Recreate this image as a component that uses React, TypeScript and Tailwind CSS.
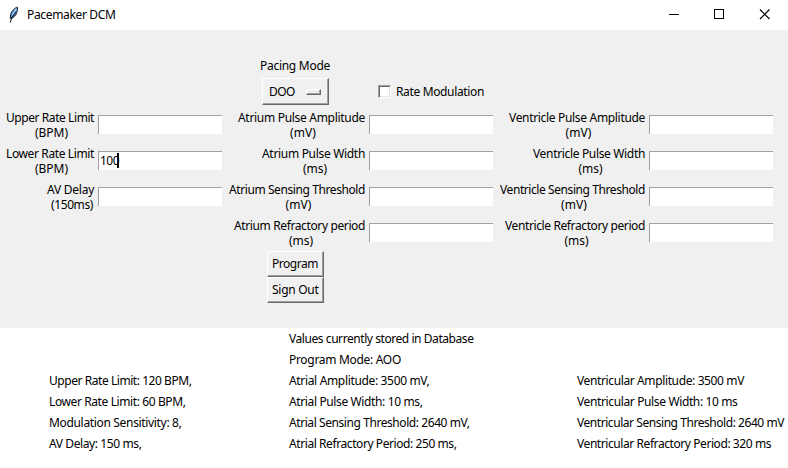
import { useLayoutEffect, useRef, useState } from "react";

// A run of text whose tracking is adjusted so that it fills the given width.
function Label({ text, w, className = "" }: { text: string; w: number; className?: string }) {
  const ref = useRef<HTMLSpanElement>(null);
  const [tracking, setTracking] = useState(0);
  useLayoutEffect(() => {
    if (ref.current) {
      const natural = ref.current.getBoundingClientRect().width;
      setTracking((w - natural) / text.length);
    }
  }, [text, w]);
  return (
    <span ref={ref} className={`inline-block whitespace-pre ${className}`} style={{ letterSpacing: tracking }}>
      {text}
    </span>
  );
}

type FieldProps = { name: string; w: number; unit: string; uw: number; value?: string };

function Field({ name, w, unit, uw, value }: FieldProps) {
  return (
    <>
      <div className="flex flex-col items-center justify-self-end leading-[15px]">
        <Label text={name} w={w} />
        <Label text={unit} w={uw} className="ml-[3px]" />
      </div>
      <div className="mb-px flex h-[19px] w-[124px] items-start border-l border-t border-[#a0a0a0] bg-white pl-px pt-px leading-[15px]">
        {value && (
          <>
            <Label text={value} w={19} />
            <span className="-ml-[2px] h-[15px] w-[2px] bg-black" />
          </>
        )}
      </div>
    </>
  );
}

const fields: (FieldProps | null)[][] = [
  [
    { name: "Upper Rate Limit", w: 88, unit: "(BPM)", uw: 33 },
    { name: "Atrium Pulse Amplitude", w: 127, unit: "(mV)", uw: 26 },
    { name: "Ventricle Pulse Amplitude", w: 136, unit: "(mV)", uw: 26 },
  ],
  [
    { name: "Lower Rate Limit", w: 88, unit: "(BPM)", uw: 33, value: "100" },
    { name: "Atrium Pulse Width", w: 103, unit: "(ms)", uw: 24 },
    { name: "Ventricle Pulse Width", w: 112, unit: "(ms)", uw: 24 },
  ],
  [
    { name: "AV Delay", w: 47, unit: "(150ms)", uw: 42 },
    { name: "Atrium Sensing Threshold", w: 136, unit: "(mV)", uw: 26 },
    { name: "Ventricle Sensing Threshold", w: 145, unit: "(mV)", uw: 26 },
  ],
  [
    null,
    { name: "Atrium Refractory period", w: 131, unit: "(ms)", uw: 24 },
    { name: "Ventricle Refractory period", w: 140, unit: "(ms)", uw: 24 },
  ],
];

const stored: [string, number][][] = [
  [["", 0], ["Values currently stored in Database", 184.5], ["", 0]],
  [["", 0], ["Program Mode: AOO", 112], ["", 0]],
  [["Upper Rate Limit: 120 BPM,", 142.5], ["Atrial Amplitude: 3500 mV,", 140.5], ["Ventricular Amplitude: 3500 mV", 167]],
  [["Lower Rate Limit: 60 BPM,", 136.5], ["Atrial Pulse Width: 10 ms,", 133.5], ["Ventricular Pulse Width: 10 ms", 160.5]],
  [["Modulation Sensitivity: 8,", 132.5], ["Atrial Sensing Threshold: 2640 mV,", 180.5], ["Ventricular Sensing Threshold: 2640 mV", 207]],
  [["AV Delay: 150 ms,", 92.5], ["Atrial Refractory Period: 250 ms,", 167.5], ["Ventricular Refractory Period: 320 ms", 194]],
];

const raised = "border border-t-white border-l-white border-r-[#696969] border-b-[#696969] shadow-[inset_-1px_-1px_0_#a0a0a0]";

function TitleBar() {
  return (
    <header className="flex h-[30px] items-center bg-white">
      <svg width="12" height="18" viewBox="0 0 12 18" className="ml-[8px]">
        <path d="M9.500 1.200C7 1.500 3.500 5 2.500 8.500L2.300 12.500 4.500 12C7.500 10.500 9.800 6 9.500 1.200z" fill="#4a8ccc" stroke="#20262e" strokeWidth="1" />
        <path d="M8.300 3 4.500 9" stroke="#a5d2f7" strokeWidth="1.500" />
        <path d="M8 5.500 3.500 12 2.300 16.500" stroke="#111" strokeWidth="1" fill="none" />
      </svg>
      <Label text="Pacemaker DCM" w={88.5} className="ml-[7px] leading-[16px]" />
      <svg width="106" height="30" viewBox="0 0 106 30" className="ml-auto mr-[14px]" fill="none" stroke="#000" shapeRendering="crispEdges">
        <path d="M1 14.500H11M46.500 9.500H55.500V18.500H46.500Z" />
        <path d="M92 9.500 101.500 19M101.500 9.500 92 19" shapeRendering="auto" strokeWidth="1.200" />
      </svg>
    </header>
  );
}

export default function App() {
  return (
    <div className="h-[468px] w-[788px] overflow-hidden bg-white font-['Noto_Sans',sans-serif] text-[12px] text-black">
      <TitleBar />
      <main className="h-[298px] bg-[#f0f0f0] pt-[28px]">
        <div className="ml-[260px] h-[15px] leading-[15px]">
          <Label text="Pacing Mode" w={70} />
        </div>
        <div className="ml-[262px] mt-[5px] flex h-[27px] items-center">
          <button className={`flex h-[27px] w-[67px] items-center pl-[6px] leading-[15px] ${raised}`}>
            <Label text="DOO" w={26} />
            <span className="ml-[11px] h-[6px] w-[15px] border border-t-white border-l-white border-r-[#696969] border-b-[#696969] shadow-[inset_-1px_-1px_0_#a0a0a0]" />
          </button>
          <label className="ml-[49px] flex items-center leading-[15px]">
            <span className="h-[13px] w-[13px] border border-t-[#a0a0a0] border-l-[#a0a0a0] border-r-white border-b-white bg-white shadow-[inset_1px_1px_0_#696969,inset_-1px_-1px_0_#e3e3e3]" />
            <Label text="Rate Modulation" w={88} className="ml-[5px]" />
          </label>
        </div>
        <section className="mt-[2px] grid grid-cols-[94px_124px_139px_124px_148px_124px] auto-rows-[36px] items-center gap-x-[4px]">
          {fields.flat().map((f, i) => (f ? <Field key={i} {...f} /> : <div key={i} className="col-span-2" />))}
        </section>
        <div className="ml-[267px] flex w-[57px] flex-col">
          <button className={`h-[26px] pb-px pl-[4px] text-left leading-[15px] ${raised}`}>
            <Label text="Program" w={46} />
          </button>
          <button className={`h-[26px] pb-px pl-[4px] text-left leading-[15px] ${raised}`}>
            <Label text="Sign Out" w={46.500} />
          </button>
        </div>
      </main>
      <footer className="grid grid-cols-[240px_288px_211px] auto-rows-[21px] pl-[49px] leading-[21px]">
        {stored.flat().map(([text, w], i) => (
          <div key={i}>{text && <Label text={text} w={w} />}</div>
        ))}
      </footer>
    </div>
  );
}
